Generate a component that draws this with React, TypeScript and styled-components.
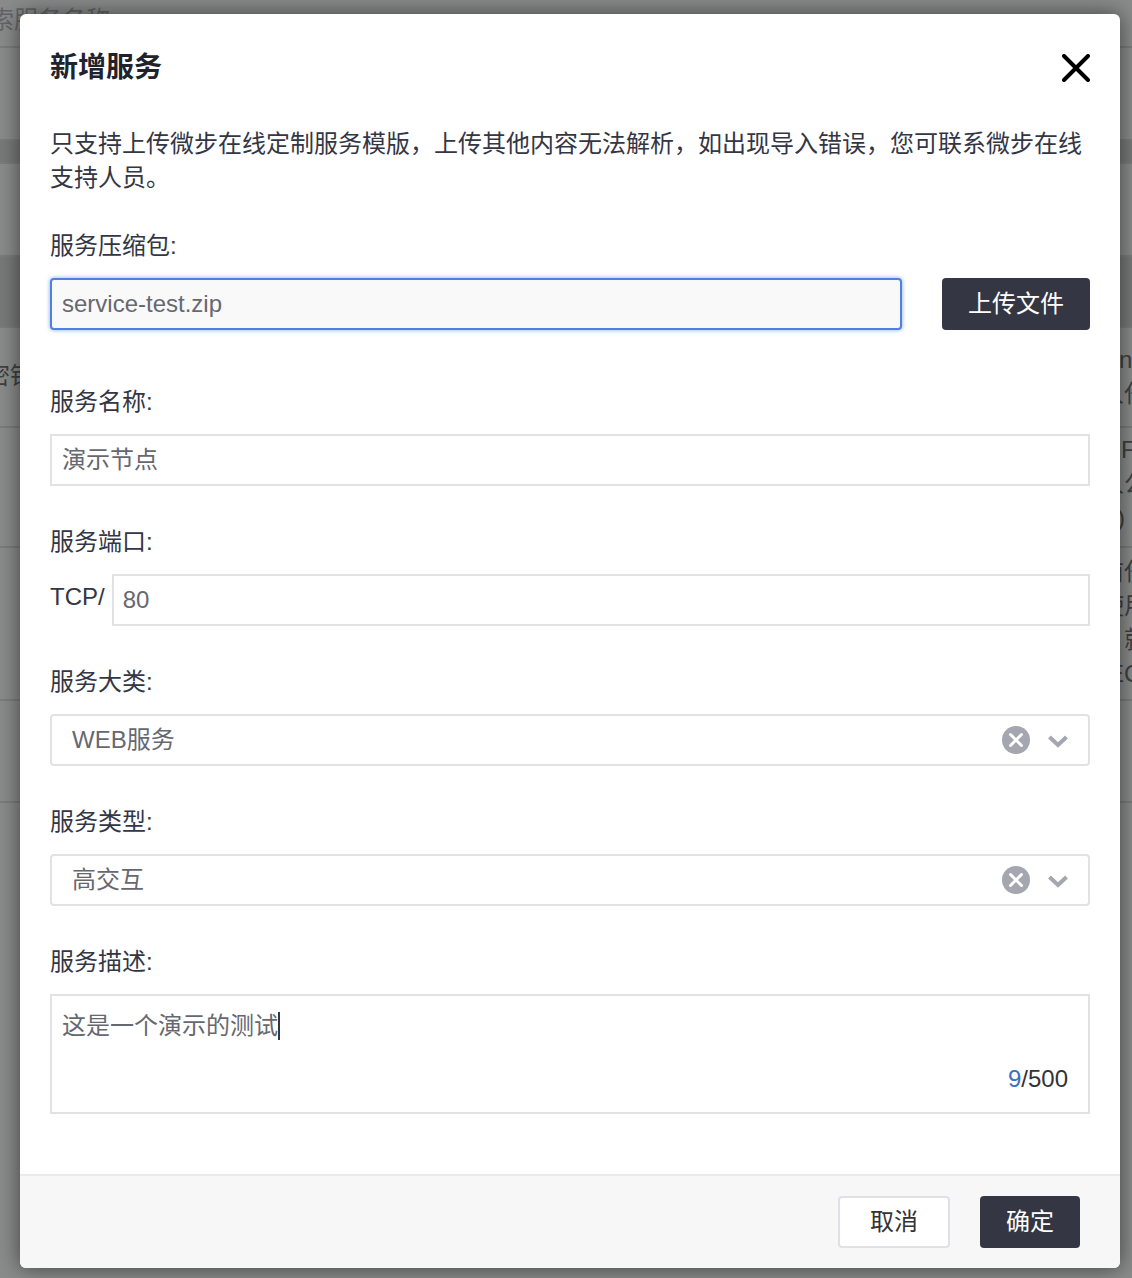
import React, { FC } from "react";
import styled, { createGlobalStyle } from "styled-components";

const FONT = `"Liberation Sans", "Noto Sans CJK SC", sans-serif`;

const GlobalStyle = createGlobalStyle`
  html, body {
    margin: 0;
    padding: 0;
    background: #8a8c8c;
    font-family: ${FONT};
  }
  * {
    box-sizing: border-box;
  }
`;

const Page = styled.div`
  width: 1132px;
  height: 1278px;
  overflow: hidden;
  position: relative;
  background: #8a8c8c;
`;

const BackRow = styled.div<{ $h: number; $dark?: boolean }>`
  height: ${(p) => p.$h}px;
  border-bottom: 2px solid #7b7d7d;
  background: ${(p) => (p.$dark ? "#787a7a" : "transparent")};
  display: flex;
  justify-content: space-between;
  color: #3f4040;
  font-size: 24px;
  line-height: 34px;
  white-space: nowrap;
`;

const SearchText = styled.div`
  margin-left: -34px;
  margin-top: 3px;
  color: #636565;
`;

const BackLeft = styled.div`
  margin-left: -14px;
  padding-top: 31px;
`;

const BackRight = styled.div<{ $top: number }>`
  width: 12px;
  overflow: hidden;
  padding-top: ${(p) => p.$top}px;
`;

const BackLine = styled.div<{ $x: number }>`
  margin-left: ${(p) => p.$x}px;
  height: 34px;
`;

const Modal = styled.div`
  position: absolute;
  left: 20px;
  top: 14px;
  width: 1100px;
  height: 1254px;
  background: #fff;
  border-radius: 6px;
  box-shadow: 0 0 22px rgba(0, 0, 0, 0.55);
  display: flex;
  flex-direction: column;
  color: #333645;
`;

const Body = styled.div`
  flex: 1;
  padding: 0 30px;
`;

const Header = styled.div`
  height: 106px;
  display: flex;
  justify-content: space-between;
  align-items: center;
`;

const Title = styled.h2`
  margin: 0 0 4px;
  font-size: 28px;
  font-weight: 700;
  color: #20222e;
`;

const CloseButton = styled.button`
  width: 28px;
  height: 28px;
  margin-top: 2px;
  padding: 0;
  border: 0;
  background: none;
  display: flex;
`;

const Notice = styled.p`
  margin: 7px 0 0;
  font-size: 24px;
  line-height: 34px;
  color: #333645;
`;

const Label = styled.div`
  height: 34px;
  font-size: 24px;
  line-height: 36px;
  color: #333645;
`;

const Field = styled.div<{ $gap?: number }>`
  margin-top: ${(p) => p.$gap ?? 38}px;
  display: flex;
  flex-direction: column;
  gap: 16px;
`;

const Row = styled.div<{ $gap: number }>`
  display: flex;
  gap: ${(p) => p.$gap}px;
`;

const Input = styled.div<{ $active?: boolean; $cjk?: boolean }>`
  flex: 1 1 auto;
  height: 52px;
  padding: 0 10px ${(p) => (p.$cjk ? "5px" : "0")} ${(p) => (p.$active || p.$cjk ? "10px" : "9px")};
  display: flex;
  align-items: center;
  font-size: 24px;
  color: #666870;
  border: 2px solid ${(p) => (p.$active ? "#4f80e6" : "#e2e2e4")};
  border-radius: ${(p) => (p.$active ? "4px" : "0")};
  background: ${(p) => (p.$active ? "#f9f9fa" : "#fff")};
  box-shadow: ${(p) => (p.$active ? "0 0 4px rgba(79, 128, 230, 0.7)" : "none")};
`;

const UploadButton = styled.button`
  width: 148px;
  height: 52px;
  padding: 0 0 5px;
  border: 0;
  border-radius: 4px;
  background: #343644;
  color: #fff;
  font-family: ${FONT};
  font-size: 24px;
`;

const Prefix = styled.span`
  font-size: 24px;
  line-height: 46px;
  color: #333645;
`;

const Select = styled.div`
  height: 52px;
  padding: 0 20px;
  display: flex;
  align-items: center;
  border: 2px solid #e2e2e4;
  border-radius: 4px;
  font-size: 24px;
  color: #666870;
`;

const SelectValue = styled.span`
  flex: 1;
  padding-bottom: 5px;
`;

const SelectIcons = styled.span`
  display: flex;
  align-items: center;
  gap: 18px;
`;

const ChevronWrap = styled.span`
  display: flex;
  margin-top: 2px;
`;

const TextArea = styled.div`
  position: relative;
  height: 120px;
  padding: 14px 10px;
  border: 2px solid #e2e2e4;
  font-size: 24px;
  line-height: 32px;
  color: #666870;
`;

const Caret = styled.span`
  display: inline-block;
  width: 2px;
  height: 28px;
  background: #333645;
  vertical-align: -6px;
`;

const Counter = styled.div`
  position: absolute;
  right: 20px;
  bottom: 17px;
  color: #333;
  line-height: 32px;
`;

const CounterNow = styled.span`
  color: #3b71c4;
`;

const Footer = styled.div`
  height: 94px;
  padding-right: 40px;
  display: flex;
  justify-content: flex-end;
  align-items: center;
  gap: 30px;
  background: #f7f7f8;
  border-top: 2px solid #ebebec;
  border-radius: 0 0 6px 6px;
`;

const FooterButton = styled.button<{ $primary?: boolean }>`
  height: 52px;
  width: ${(p) => (p.$primary ? "100px" : "112px")};
  padding: 0 0 5px;
  border-radius: 4px;
  border: ${(p) => (p.$primary ? "0" : "2px solid #e0e0e6")};
  background: ${(p) => (p.$primary ? "#343644" : "#fff")};
  color: ${(p) => (p.$primary ? "#fff" : "#333")};
  font-family: ${FONT};
  font-size: 24px;
`;

const CloseIcon: FC = () => (
  <svg width="28" height="28" viewBox="0 0 28 28">
    <path d="M2 2 L26 26 M26 2 L2 26" stroke="#000" strokeWidth="4" strokeLinecap="round" />
  </svg>
);

const ClearIcon: FC = () => (
  <svg width="28" height="28" viewBox="0 0 28 28">
    <circle cx="14" cy="14" r="14" fill="#a5a6b0" />
    <path d="M8.5 8.5 L19.5 19.5 M19.5 8.5 L8.5 19.5" stroke="#fff" strokeWidth="3" strokeLinecap="round" />
  </svg>
);

const ChevronIcon: FC = () => (
  <svg width="20" height="14" viewBox="0 0 20 14">
    <path d="M1.5 3 L10 11 L18.5 3" fill="none" stroke="#a5a6b0" strokeWidth="4" />
  </svg>
);

const SelectBox: FC<{ value: string }> = ({ value }) => (
  <Select>
    <SelectValue>{value}</SelectValue>
    <SelectIcons>
      <ClearIcon />
      <ChevronWrap>
        <ChevronIcon />
      </ChevronWrap>
    </SelectIcons>
  </Select>
);

const App: FC = () => (
  <Page>
    <GlobalStyle />
    <BackRow $h={48}>
      <SearchText>搜索服务名称</SearchText>
    </BackRow>
    <BackRow $h={93} />
    <BackRow $h={23} $dark />
    <BackRow $h={93} />
    <BackRow $h={71} $dark />
    <BackRow $h={100}>
      <BackLeft>密钥</BackLeft>
      <BackRight $top={15}>
        <BackLine $x={-1}>ne</BackLine>
        <BackLine $x={-20}>人任</BackLine>
      </BackRight>
    </BackRow>
    <BackRow $h={120}>
      <span />
      <BackRight $top={5}>
        <BackLine $x={1}>FP</BackLine>
        <BackLine $x={-20}>人公</BackLine>
        <BackLine $x={-3}>)</BackLine>
      </BackRight>
    </BackRow>
    <BackRow $h={153}>
      <span />
      <BackRight $top={7}>
        <BackLine $x={-20}>前任</BackLine>
        <BackLine $x={-20}>使用</BackLine>
        <BackLine $x={4}>就</BackLine>
        <BackLine $x={-12}>EC</BackLine>
      </BackRight>
    </BackRow>
    <BackRow $h={102} />
    <Modal>
      <Body>
        <Header>
          <Title>新增服务</Title>
          <CloseButton>
            <CloseIcon />
          </CloseButton>
        </Header>
        <Notice>
          只支持上传微步在线定制服务模版，上传其他内容无法解析，如出现导入错误，您可联系微步在线支持人员。
        </Notice>
        <Field $gap={33}>
          <Label>服务压缩包:</Label>
          <Row $gap={40}>
            <Input $active>service-test.zip</Input>
            <UploadButton>上传文件</UploadButton>
          </Row>
        </Field>
        <Field $gap={54}>
          <Label>服务名称:</Label>
          <Input $cjk>演示节点</Input>
        </Field>
        <Field>
          <Label>服务端口:</Label>
          <Row $gap={7}>
            <Prefix>TCP/</Prefix>
            <Input>80</Input>
          </Row>
        </Field>
        <Field>
          <Label>服务大类:</Label>
          <SelectBox value="WEB服务" />
        </Field>
        <Field>
          <Label>服务类型:</Label>
          <SelectBox value="高交互" />
        </Field>
        <Field>
          <Label>服务描述:</Label>
          <TextArea>
            这是一个演示的测试
            <Caret />
            <Counter>
              <CounterNow>9</CounterNow>/500
            </Counter>
          </TextArea>
        </Field>
      </Body>
      <Footer>
        <FooterButton>取消</FooterButton>
        <FooterButton $primary>确定</FooterButton>
      </Footer>
    </Modal>
  </Page>
);

export default App;
